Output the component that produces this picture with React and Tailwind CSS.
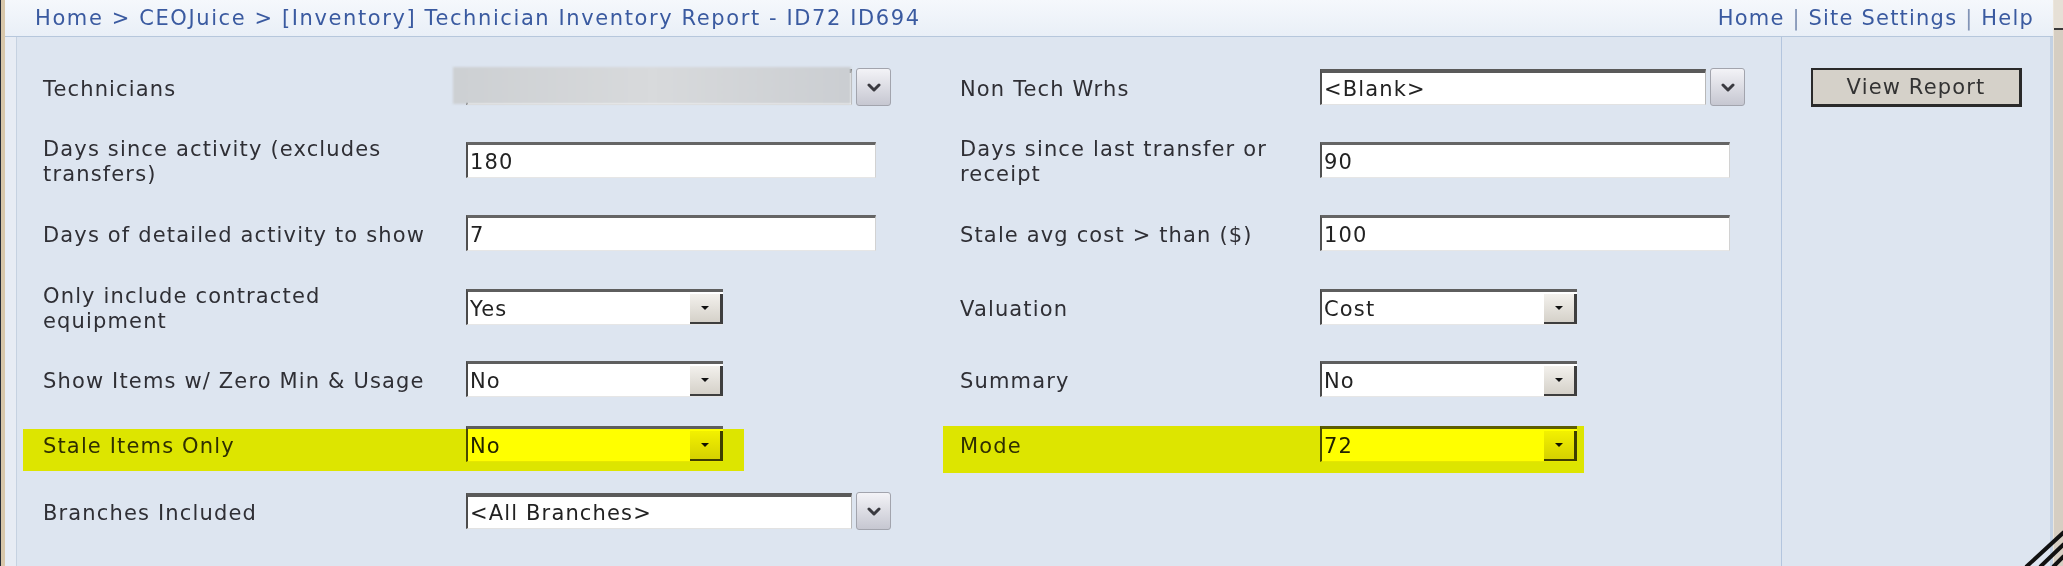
import React from "react";

function Chevron() {
  return (
    <svg width="14" height="9" viewBox="0 0 14 9">
      <path d="M2 2 L7 7 L12 2" fill="none" stroke="#3a3a40" strokeWidth="3" strokeLinecap="round" strokeLinejoin="round" />
    </svg>
  );
}

function TextInput({ value }) {
  return (
    <div className="flex h-[36px] w-[410px] items-center border-t-[3px] border-l-2 border-r border-b border-t-[#656565] border-l-[#505050] border-r-[#d2d2d2] border-b-[#e6e6e6] bg-white pl-[2px] pt-[2px] text-[#222222]">
      {value}
    </div>
  );
}

function SmallSelect({ value }) {
  return (
    <div className="flex h-[36px] w-[257px] border-t-[3px] border-l-2 border-b border-t-[#5e5e5e] border-l-[#4a4a4a] border-b-[#e6e6e6] bg-white">
      <div className="flex flex-1 items-center pl-[2px] pt-[2px] text-[#222222]">{value}</div>
      <div className="mt-[2px] flex w-[33px] items-center justify-center border-r-[3px] border-b-[2px] border-r-[#3e3e3e] border-b-[#3e3e3e] bg-gradient-to-b from-[#f3f1ed] to-[#d5d1c9]">
        <div className="h-0 w-0 border-x-[4px] border-t-[4px] border-x-transparent border-t-[#111111]" />
      </div>
    </div>
  );
}

function WideSelect({ value }) {
  return (
    <div className="flex items-center gap-[4px]">
      <div className="flex h-[36px] w-[386px] items-center border-t-[4px] border-l-2 border-r border-b border-t-[#5a5a5a] border-l-[#4d4d4d] border-r-[#b8b8b8] border-b-[#e2e2e2] bg-white pl-[2px] pt-[2px] text-[#222222]">
        {value}
      </div>
      <div className="flex h-[38px] w-[35px] items-center justify-center rounded-[3px] border border-[#a2a4ad] bg-gradient-to-b from-[#f3f3f7] to-[#c6c7d1]">
        <Chevron />
      </div>
    </div>
  );
}

function Row({ h, left, leftCtl, right, rightCtl, children }) {
  return (
    <div className={`relative grid grid-cols-[449px_494px_360px_1fr] items-center ${h}`}>
      <div className="pl-[26px] pt-[4px] leading-[25px]">{left}</div>
      <div>{leftCtl}</div>
      <div className="pt-[4px] leading-[25px]">{right}</div>
      <div>{rightCtl}</div>
      {children}
    </div>
  );
}

export default function App() {
  return (
    <div className="relative flex h-[566px] w-[2063px] overflow-hidden font-['DejaVu_Sans',sans-serif] text-[21px] leading-[27px] tracking-[1.15px] text-[#2f2f35]">
      <div className="w-[1px] bg-[#262b36]" />
      <div className="w-[4px] bg-[#d8c7aa]" />
      <div className="flex w-[2048px] flex-col">
        <header className="flex h-[37px] items-center justify-between border-b border-[#b6c7dc] bg-gradient-to-b from-[#f5f8fc] to-[#e9eff7] pl-[30px] pr-[19px] pt-[1px] tracking-[1.6px] text-[#3a5aa0]">
          <div>Home &gt; CEOJuice &gt; [Inventory] Technician Inventory Report - ID72 ID694</div>
          <div className="tracking-[1.2px]">
            Home <span className="text-[#8294b6]">|</span> Site Settings <span className="text-[#8294b6]">|</span> Help
          </div>
        </header>
        <div className="flex flex-1">
          <div className="w-[12px] border-r border-[#c6d2e1] bg-[#e7ecf4]" />
          <div className="w-[1764px] bg-[#dde5f0] pt-[17px]">
            <Row
              h="h-[66px]"
              left="Technicians"
              leftCtl={
                <div className="relative w-fit">
                  <WideSelect value="" />
                  <div className="absolute left-[-13px] top-[-1px] h-[37px] w-[398px] bg-gradient-to-r from-[#cdd0d3] via-[#d8dadc] to-[#cbced2] blur-[1px]" />
                </div>
              }
              right="Non Tech Wrhs"
              rightCtl={<WideSelect value="<Blank>" />}
            />
            <Row
              h="h-[80px]"
              left={<>Days since activity (excludes<br />transfers)</>}
              leftCtl={<TextInput value="180" />}
              right={<>Days since last transfer or<br />receipt</>}
              rightCtl={<TextInput value="90" />}
            />
            <Row
              h="h-[66px]"
              left="Days of detailed activity to show"
              leftCtl={<TextInput value="7" />}
              right="Stale avg cost > than ($)"
              rightCtl={<TextInput value="100" />}
            />
            <Row
              h="h-[82px]"
              left={<>Only include contracted<br />equipment</>}
              leftCtl={<SmallSelect value="Yes" />}
              right="Valuation"
              rightCtl={<SmallSelect value="Cost" />}
            />
            <Row
              h="h-[62px]"
              left="Show Items w/ Zero Min & Usage"
              leftCtl={<SmallSelect value="No" />}
              right="Summary"
              rightCtl={<SmallSelect value="No" />}
            />
            <Row
              h="h-[68px]"
              left="Stale Items Only"
              leftCtl={<SmallSelect value="No" />}
              right="Mode"
              rightCtl={<SmallSelect value="72" />}
            >
              <div className="pointer-events-none absolute left-[6px] top-[19px] h-[42px] w-[721px] bg-[#ffff00] mix-blend-multiply" />
              <div className="pointer-events-none absolute left-[926px] top-[16px] h-[47px] w-[641px] bg-[#ffff00] mix-blend-multiply" />
            </Row>
            <Row
              h="h-[66px]"
              left="Branches Included"
              leftCtl={<WideSelect value="<All Branches>" />}
              right=""
              rightCtl={null}
            />
          </div>
          <div className="w-[1px] bg-[#b3c5de]" />
          <div className="w-[268px] bg-[#dde5f0] pl-[29px] pt-[31px]">
            <div className="flex h-[39px] w-[211px] items-center justify-center border-2 border-b-[3px] border-r-[3px] border-[#2a2a2a] bg-[#d5d1c9] pt-[1px] text-[#333333]">
              View Report
            </div>
          </div>
          <div className="w-[3px] bg-[#c3d1e3]" />
        </div>
      </div>
      <div className="flex w-[10px] flex-col border-l border-[#ece6dc] bg-[#d6cec2]">
        <div className="h-[30px] border-b-2 border-[#3a3a3a] bg-[#e6e0d6]" />
      </div>
      <svg className="absolute bottom-0 right-0" width="40" height="36" viewBox="0 0 40 36">
        <path d="M3 37 L41 2 M17 37 L41 14 M30 37 L41 26" stroke="#111111" strokeWidth="4" fill="none" />
      </svg>
    </div>
  );
}
